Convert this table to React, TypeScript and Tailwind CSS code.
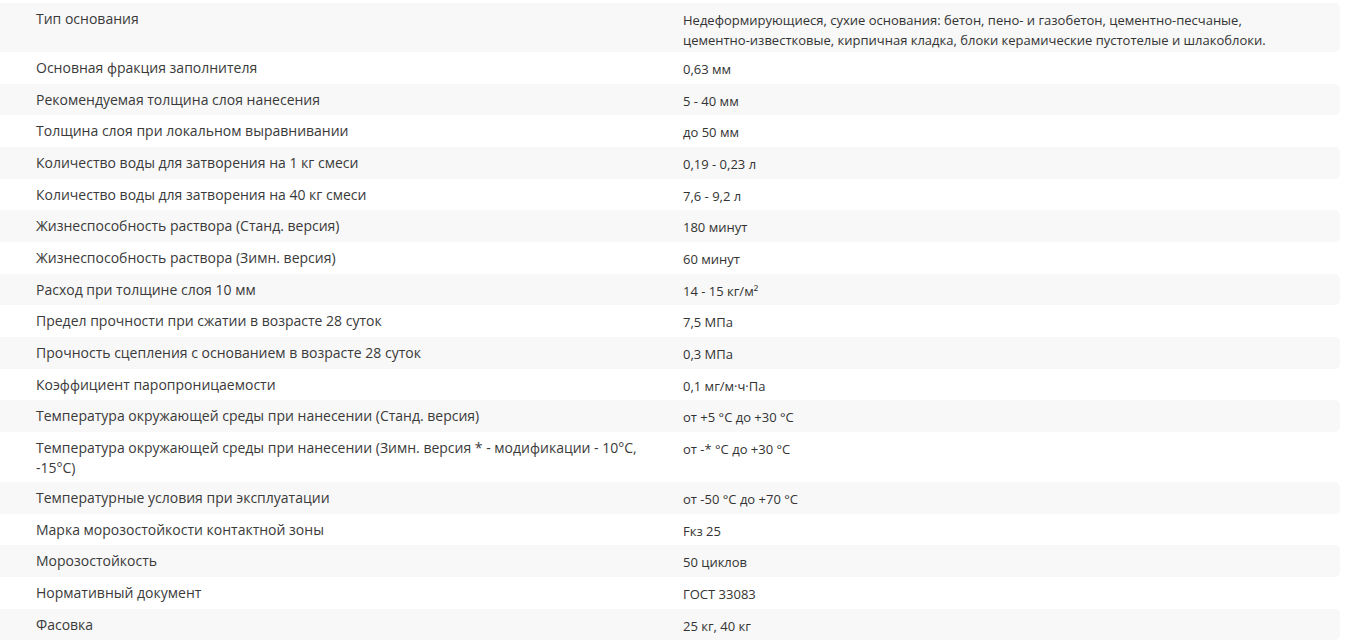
const rows: { name: React.ReactNode; value: React.ReactNode }[] = [
  {
    name: "Тип основания",
    value: (
      <>
        Недеформирующиеся, сухие основания: бетон, пено- и газобетон, цементно-песчаные,
        <br />
        цементно-известковые, кирпичная кладка, блоки керамические пустотелые и шлакоблоки.
      </>
    ),
  },
  { name: "Основная фракция заполнителя", value: "0,63 мм" },
  { name: "Рекомендуемая толщина слоя нанесения", value: "5 - 40 мм" },
  { name: "Толщина слоя при локальном выравнивании", value: "до 50 мм" },
  { name: "Количество воды для затворения на 1 кг смеси", value: "0,19 - 0,23 л" },
  { name: "Количество воды для затворения на 40 кг смеси", value: "7,6 - 9,2 л" },
  { name: "Жизнеспособность раствора (Станд. версия)", value: "180 минут" },
  { name: "Жизнеспособность раствора (Зимн. версия)", value: "60 минут" },
  { name: "Расход при толщине слоя 10 мм", value: "14 - 15 кг/м²" },
  { name: "Предел прочности при сжатии в возрасте 28 суток", value: "7,5 МПа" },
  { name: "Прочность сцепления с основанием в возрасте 28 суток", value: "0,3 МПа" },
  { name: "Коэффициент паропроницаемости", value: "0,1 мг/м·ч·Па" },
  { name: "Температура окружающей среды при нанесении (Станд. версия)", value: "от +5 °C до +30 °C" },
  {
    name: "Температура окружающей среды при нанесении (Зимн. версия * - модификации - 10°C, -15°C)",
    value: "от -* °C до +30 °C",
  },
  { name: "Температурные условия при эксплуатации", value: "от -50 °C до +70 °C" },
  { name: "Марка морозостойкости контактной зоны", value: "Fкз 25" },
  { name: "Морозостойкость", value: "50 циклов" },
  { name: "Нормативный документ", value: "ГОСТ 33083" },
  { name: "Фасовка", value: "25 кг, 40 кг" },
];

export default function App() {
  return (
    <div className="bg-white w-[1350px] h-[642px] overflow-hidden pt-[3px] pr-[10px] font-['Open_Sans',sans-serif] text-[#333]">
      {rows.map((row, i) => (
        <div
          key={i}
          className={`flex items-start min-h-[31.67px] rounded-r-[5px] ${i % 2 === 0 ? "bg-[#f8f8f8]" : "bg-white"}`}
        >
          <div className="w-[668px] shrink-0 pl-[36px] pr-[24px] pt-[6px] pb-[4px] text-[14px] leading-[20px] text-[#3a3a3a]">
            {row.name}
          </div>
          <div className="pl-[15px] pt-[8px] pb-[2px] text-[13px] leading-[19.5px]">
            {row.value}
          </div>
        </div>
      ))}
    </div>
  );
}
